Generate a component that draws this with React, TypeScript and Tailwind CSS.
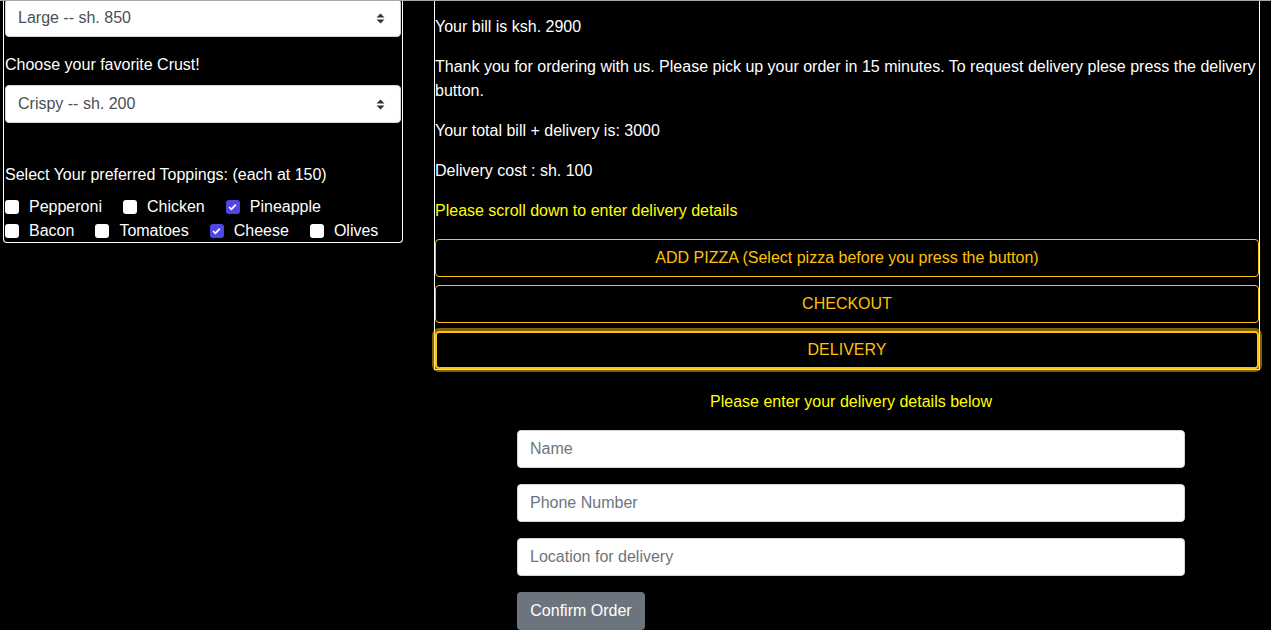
import React from 'react';

const TOPPINGS_ROW1 = [
  { name: 'Pepperoni', checked: false },
  { name: 'Chicken', checked: false },
  { name: 'Pineapple', checked: true },
];

const TOPPINGS_ROW2 = [
  { name: 'Bacon', checked: false },
  { name: 'Tomatoes', checked: false },
  { name: 'Cheese', checked: true },
  { name: 'Olives', checked: false },
];

function SelectBox({ label }: { label: string }) {
  return (
    <div className="flex h-[38px] w-full items-center justify-between rounded-[4px] border border-[#ced4da] bg-white pl-[12px] pr-[12px] text-[16px] text-[#495057]">
      <span>{label}</span>
      <svg width="9" height="11" viewBox="0 0 9 11" className="mr-[3px]">
        <path d="M4.5 0.5 L8.5 4.5 L0.5 4.5 Z" fill="#333" />
        <path d="M0.5 6.5 L8.5 6.5 L4.5 10.5 Z" fill="#333" />
      </svg>
    </div>
  );
}

function Check({ name, checked }: { name: string; checked: boolean }) {
  return (
    <label className="mr-[21px] flex items-center">
      {checked ? (
        <span className="flex h-[14px] w-[14px] items-center justify-center rounded-[3px] bg-[#4f46e5]">
          <svg width="9" height="8" viewBox="0 0 9 8">
            <path d="M1.2 4.2 L3.4 6.3 L7.8 1.6" stroke="white" strokeWidth="1.8" fill="none" />
          </svg>
        </span>
      ) : (
        <span className="h-[14px] w-[14px] rounded-[3px] bg-white" />
      )}
      <span className="ml-[10px]">{name}</span>
    </label>
  );
}

function OutlineButton({ children, focused }: { children: React.ReactNode; focused?: boolean }) {
  return (
    <button
      className={
        focused
          ? 'block h-[38px] w-full rounded-[4px] border-2 border-[#ffc107] text-[16px] text-[#ffc107] shadow-[0_0_0_3px_rgba(255,193,7,0.5)]'
          : 'mb-[8px] block h-[38px] w-full rounded-[4px] border border-[#ffc107] text-[16px] text-[#ffc107]'
      }
    >
      {children}
    </button>
  );
}

export default function App() {
  return (
    <div className="relative h-[630px] w-[1271px] overflow-hidden bg-black font-['Liberation_Sans',Arial,sans-serif] text-[16px] leading-[24px] text-white">
      <div className="absolute left-0 right-0 top-0 z-10 h-px bg-[#a8a8a8]" />

      <div className="flex items-start">
        {/* order form */}
        <div className="ml-[3px] mt-[-3px] w-[400px] rounded-b-[4px] border border-t-0 border-white px-[1px]">
          <div className="pt-[2px]">
            <SelectBox label="Large -- sh. 850" />
          </div>
          <p className="mb-[8px] mt-[16px]">Choose your favorite Crust!</p>
          <SelectBox label="Crispy -- sh. 200" />
          <p className="mb-[8px] mt-[40px]">Select Your preferred Toppings: (each at 150)</p>
          <div className="flex">
            {TOPPINGS_ROW1.map((t) => (
              <Check key={t.name} name={t.name} checked={t.checked} />
            ))}
          </div>
          <div className="flex h-[23px] items-start">
            {TOPPINGS_ROW2.map((t) => (
              <Check key={t.name} name={t.name} checked={t.checked} />
            ))}
          </div>
        </div>

        {/* bill + delivery */}
        <div className="ml-[31px] w-[834px]">
          <div className="mt-[-2px] w-[826px] border border-white pt-[16px]">
            <p className="mb-[16px]">Your bill is ksh. 2900</p>
            <p className="mb-[16px]">
              Thank you for ordering with us. Please pick up your order in 15 minutes. To request delivery plese press the delivery button.
            </p>
            <p className="mb-[16px]">Your total bill + delivery is: 3000</p>
            <p className="mb-[16px]">Delivery cost : sh. 100</p>
            <p className="mb-[16px] text-[#ffff00]">Please scroll down to enter delivery details</p>
            <OutlineButton>ADD PIZZA (Select pizza before you press the button)</OutlineButton>
            <OutlineButton>CHECKOUT</OutlineButton>
            <OutlineButton focused>DELIVERY</OutlineButton>
          </div>

          <div className="mx-auto mt-[20px] w-[668px]">
            <p className="mb-[16px] text-center text-[#ffff00]">Please enter your delivery details below</p>
            <input
              placeholder="Name"
              className="mb-[16px] block h-[38px] w-full rounded-[4px] border border-[#ced4da] bg-white px-[12px] text-[16px] text-[#495057] placeholder:text-[#6c757d]"
            />
            <input
              placeholder="Phone Number"
              className="mb-[16px] block h-[38px] w-full rounded-[4px] border border-[#ced4da] bg-white px-[12px] text-[16px] text-[#495057] placeholder:text-[#6c757d]"
            />
            <input
              placeholder="Location for delivery"
              className="mb-[16px] block h-[38px] w-full rounded-[4px] border border-[#ced4da] bg-white px-[12px] text-[16px] text-[#495057] placeholder:text-[#6c757d]"
            />
            <button className="h-[38px] w-[128px] rounded-[4px] bg-[#6c757d] text-[16px] text-white">Confirm Order</button>
          </div>
        </div>
      </div>
    </div>
  );
}
